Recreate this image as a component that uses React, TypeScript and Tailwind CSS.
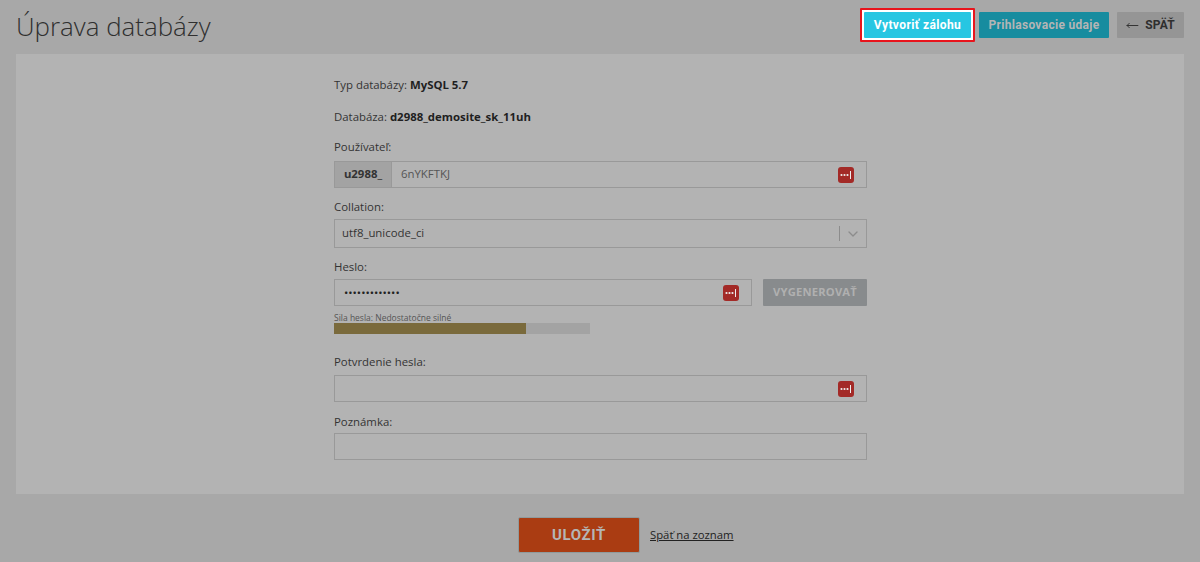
import { ChevronDown, MoveLeft } from "lucide-react";

const PassIcon = () => {
  return (
    <span className="flex h-[16px] w-[16px] items-center justify-center rounded-[3px] bg-[#a32a27]">
      <svg width="12" height="8" viewBox="0 0 12 8">
        <circle cx="1.5" cy="4" r="1.1" fill="#eeeeee" />
        <circle cx="4.5" cy="4" r="1.1" fill="#eeeeee" />
        <circle cx="7.5" cy="4" r="1.1" fill="#eeeeee" />
        <rect x="10" y="0" width="1" height="8" fill="#eeeeee" />
      </svg>
    </span>
  );
};

const Label = ({ text }: { text: string }) => {
  return <label className="block h-[18px] text-[11.4px] leading-[18px] text-[#333]">{text}</label>;
};

const inputBox = "flex items-center border border-[#999] bg-[#b3b3b3]";

const App = () => {
  return (
    <div className="h-[562px] overflow-hidden bg-[#a8a8a8] font-['Open_Sans',sans-serif]">
      <header className="flex h-[54px] items-start justify-between pl-[16px] pr-[16px]">
        <h1 className="mt-[8px] text-[25.9px] font-light leading-[36px] text-[#2f2f2f]">Úprava databázy</h1>
        <div className="mt-[8px] flex items-start font-['Roboto',sans-serif] text-[12px] font-bold">
          <div className="mr-[4px] rounded-[1px] border-2 border-[#e8141c] bg-white p-[2px]">
            <button className="flex h-[26px] w-[107px] items-center justify-center rounded-[1px] bg-[#27c6e2] tracking-[0.4px] text-white">
              Vytvoriť zálohu
            </button>
          </div>
          <button className="mt-[4px] flex h-[26px] w-[130px] items-center justify-center rounded-[1px] bg-[#178c9f] tracking-[0.3px] text-[#b5b5b5]">
            Prihlasovacie údaje
          </button>
          <button className="ml-[8px] mt-[4px] flex h-[26px] w-[67px] items-center justify-center gap-[6px] rounded-[1px] bg-[#959595] tracking-[0.2px] text-[#2f2f2f]">
            <MoveLeft size={13} strokeWidth={1.75} />
            SPÄŤ
          </button>
        </div>
      </header>

      <main className="mx-[16px] h-[440px] bg-[#b3b3b3] pt-[22px]">
        <form className="ml-[318px] w-[533px]">
          <p className="h-[18px] text-[11.4px] leading-[18px] text-[#333]">
            Typ databázy: <b className="text-[#1f1f1f]">MySQL 5.7</b>
          </p>
          <p className="mt-[14px] h-[18px] text-[11.4px] leading-[18px] text-[#333]">
            Databáza: <b className="text-[#1f1f1f]">d2988_demosite_sk_11uh</b>
          </p>

          <div className="mt-[12px]">
            <Label text="Používateľ:" />
          </div>
          <div className={`${inputBox} mt-[5px] h-[27px]`}>
            <span className="flex h-full w-[57px] items-center justify-center border-r border-[#999] bg-[#a3a3a3] pb-[1px] text-[11.4px] font-bold text-[#333]">
              u2988_
            </span>
            <span className="ml-[9px] flex-1 pb-[1px] text-[11.4px] text-[#555]">6nYKFTKJ</span>
            <span className="mr-[12px]">
              <PassIcon />
            </span>
          </div>

          <div className="mt-[10px]">
            <Label text="Collation:" />
          </div>
          <div className={`${inputBox} mt-[3px] h-[29px]`}>
            <span className="ml-[7px] flex-1 pb-[1px] text-[11.4px] text-[#333]">utf8_unicode_ci</span>
            <span className="h-[15px] w-px bg-[#8c8c8c]" />
            <ChevronDown size={16} className="mx-[5px] text-[#8c8c8c]" />
          </div>

          <div className="mt-[10px]">
            <Label text="Heslo:" />
          </div>
          <div className="mt-[3px] flex h-[27px] justify-between">
            <div className={`${inputBox} w-[418px]`}>
              <span className="ml-[9px] flex-1 text-[11.4px] leading-none text-[#222]">•••••••••••••</span>
              <span className="mr-[12px]">
                <PassIcon />
              </span>
            </div>
            <button type="button" className="h-[27px] w-[104px] rounded-[1px] bg-[#888b8d] text-[11.2px] font-bold tracking-[0.2px] text-[#b0b0b0]">
              VYGENEROVAŤ
            </button>
          </div>
          <p className="mt-[6px] h-[11px] text-[8.5px] leading-[11px] text-[#555]">Sila hesla: Nedostatočne silné</p>
          <div className="h-[11px] w-[256px] bg-[#a3a3a3]">
            <div className="h-full w-[192px] bg-[#7a6a3c]" />
          </div>

          <div className="mt-[19px]">
            <Label text="Potvrdenie hesla:" />
          </div>
          <div className={`${inputBox} mt-[4px] h-[27px] justify-end`}>
            <span className="mr-[12px]">
              <PassIcon />
            </span>
          </div>

          <div className="mt-[11px]">
            <Label text="Poznámka:" />
          </div>
          <div className={`${inputBox} mt-[2px] h-[27px]`} />
        </form>
      </main>

      <footer className="ml-[518px] mt-[23px] flex items-center">
        <button className="flex h-[36px] w-[122px] items-center justify-center rounded-[2px] border border-[#8f9a9c] bg-[#aa3c12] font-['Roboto',sans-serif] text-[15px] font-bold tracking-[0.6px] text-[#b5b5b5]">
          ULOŽIŤ
        </button>
        <a className="ml-[10px] text-[11.3px] text-[#222] underline">Späť na zoznam</a>
      </footer>
    </div>
  );
};

export default App;
